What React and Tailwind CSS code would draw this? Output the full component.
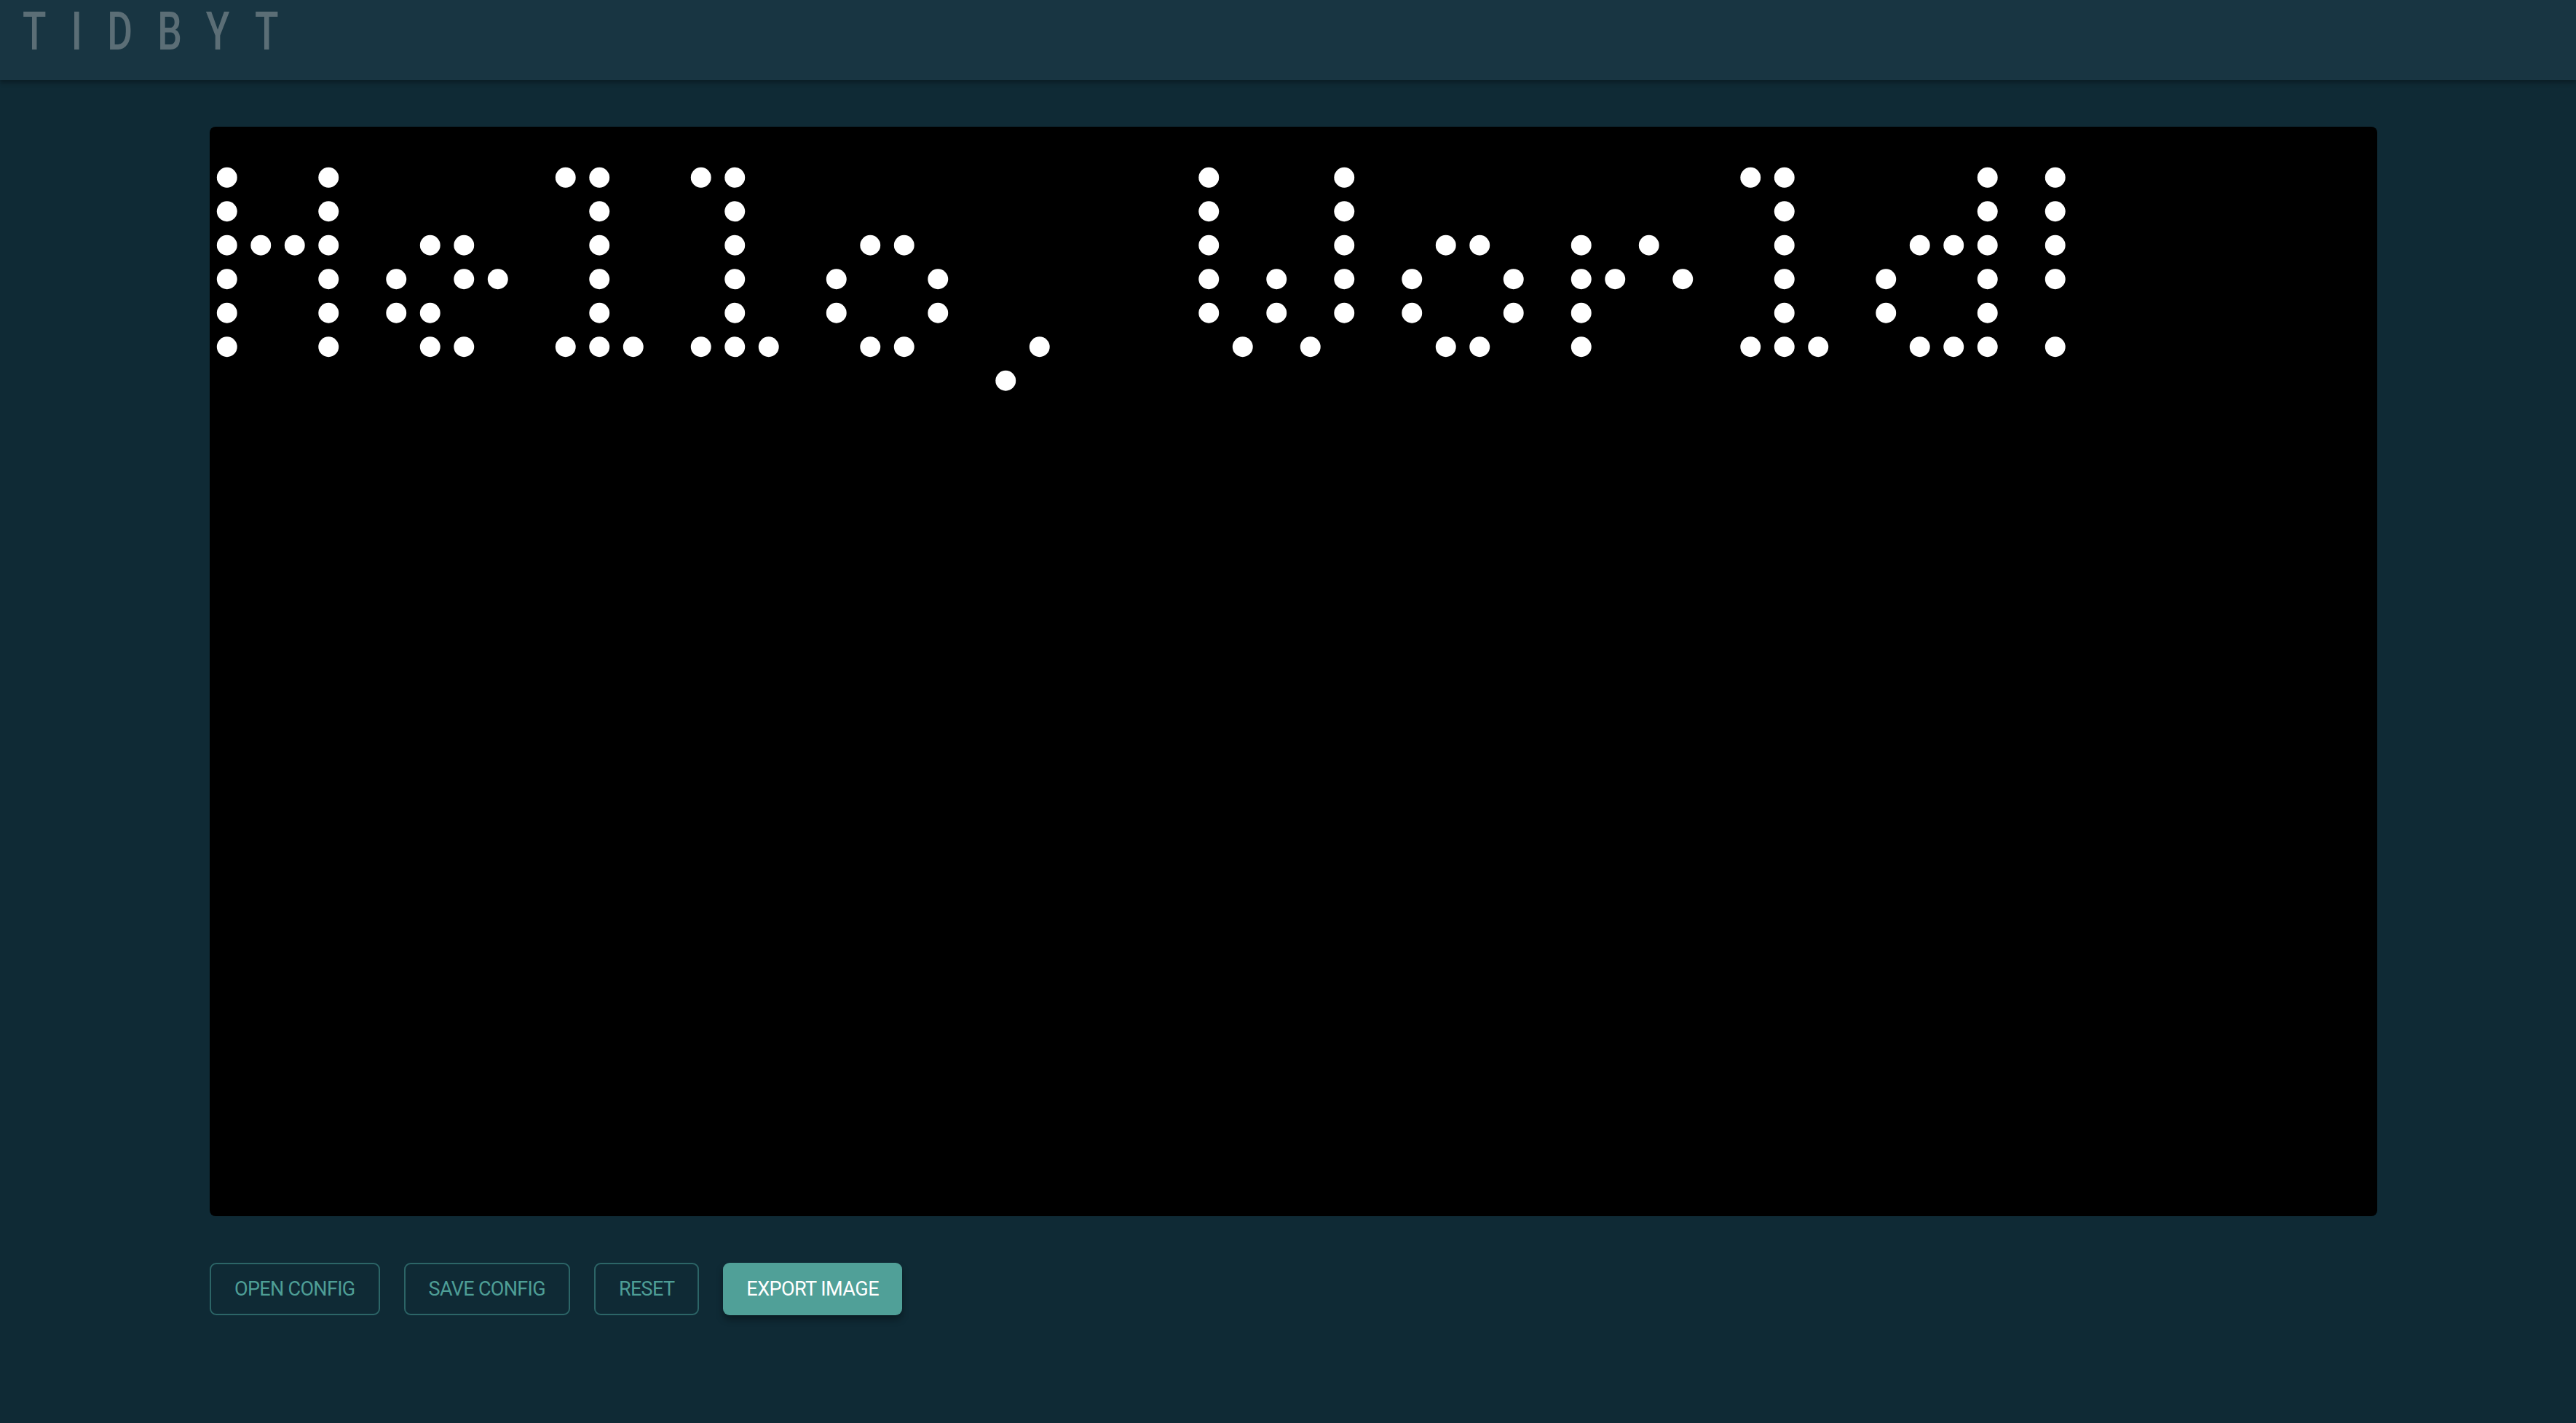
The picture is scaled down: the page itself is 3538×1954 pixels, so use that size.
import React from "react";

// 5px-ish proportional pixel font, just the glyphs this message needs
const FONT = {
  H: ["#..#", "#..#", "####", "#..#", "#..#", "#..#", "...."],
  e: ["....", "....", ".##.", "#.##", "##..", ".##.", "...."],
  l: ["##.", ".#.", ".#.", ".#.", ".#.", "###", "..."],
  o: ["....", "....", ".##.", "#..#", "#..#", ".##.", "...."],
  ",": ["..", "..", "..", "..", "..", ".#", "#."],
  " ": ["..", "..", "..", "..", "..", "..", ".."],
  W: ["#...#", "#...#", "#...#", "#.#.#", "#.#.#", ".#.#.", "....."],
  r: ["....", "....", "#.#.", "##.#", "#...", "#...", "...."],
  d: ["...#", "...#", ".###", "#..#", "#..#", ".###", "...."],
  "!": ["#", "#", "#", "#", ".", "#", "."],
};

function renderText(text, top = 1) {
  const pixels = [];
  let x = 0;
  for (const ch of text) {
    const glyph = FONT[ch];
    if (!glyph) continue;
    glyph.forEach((row, y) => {
      [...row].forEach((c, dx) => {
        if (c === "#") pixels.push([x + dx, top + y]);
      });
    });
    x += glyph[0].length + 1;
  }
  return pixels;
}

function Display({ text }) {
  const pixels = renderText(text);
  return (
    <svg viewBox="0 0 64 32" className="block w-full h-[1488px]">
      {pixels.map(([x, y]) => (
        <circle key={`${x}-${y}`} cx={x + 0.5} cy={y + 0.5} r={0.3} fill="#fff" />
      ))}
    </svg>
  );
}

export default function App() {
  const outlined =
    "h-[72px] px-[32px] rounded-[9px] border-2 border-[#2c6567] text-[#4e9e96] text-[27px] tracking-[-0.025em] uppercase";

  return (
    <div className="min-h-screen bg-[#0f2a35] font-['Roboto',sans-serif]">
      <header className="h-[110px] bg-[#183542] shadow-[0_4px_6px_rgba(0,0,0,0.3)] relative z-10">
        <div className="pl-[31px] pt-[7px]">
          <span className="inline-block origin-left scale-x-[0.73] text-[73px] leading-none font-medium text-[#5b6e76] tracking-[47px]">
            TIDBYT
          </span>
        </div>
      </header>

      <main className="pl-[288px] pr-[273px] pt-[64px]">
        <div className="bg-black rounded-[8px] h-[1496px] overflow-hidden">
          <Display text="Hello, World!" />
        </div>

        <div className="flex gap-[33px] mt-[64px]">
          <button className={outlined}>Open Config</button>
          <button className={outlined}>Save Config</button>
          <button className={outlined}>Reset</button>
          <button className="h-[72px] px-[32px] rounded-[9px] bg-[#50a098] text-white text-[27px] tracking-[-0.02em] uppercase shadow-[0_6px_10px_rgba(0,0,0,0.35)]">
            Export Image
          </button>
        </div>
      </main>
    </div>
  );
}
